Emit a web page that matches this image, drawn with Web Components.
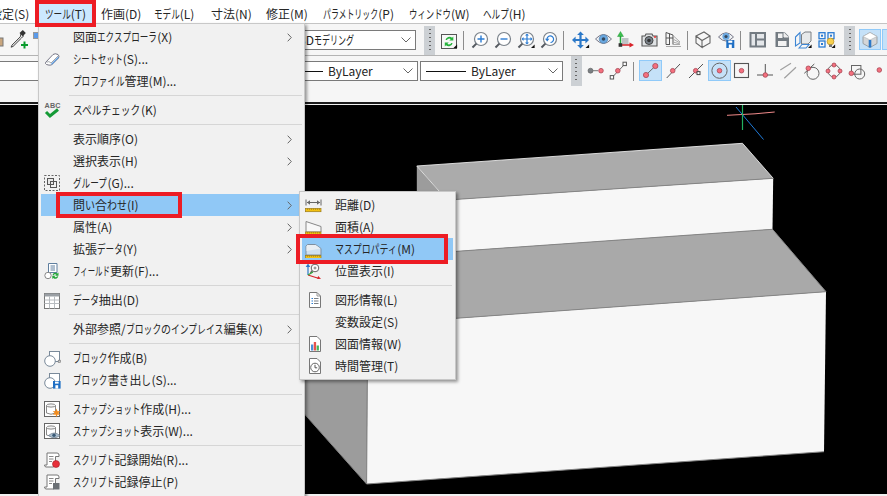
<!DOCTYPE html>
<html lang="ja">
<head>
<meta charset="utf-8">
<style>
html,body{margin:0;padding:0;width:887px;height:496px;overflow:hidden;background:#f0f0f0}
body{font:12px "Noto Sans CJK JP","Noto Sans",sans-serif;color:#262626}
</style>
</head>
<body>
<cad-app>
  <menu-bar>
    <bar-item w="40" label="設定(S)"></bar-item>
    <bar-item w="41" label="ツール(T)" active></bar-item>
    <bar-item w="38" label="作画(D)"></bar-item>
    <bar-item w="42" label="モデル(L)"></bar-item>
    <bar-item w="40" label="寸法(N)"></bar-item>
    <bar-item w="42" label="修正(M)"></bar-item>
    <bar-item w="71" kw="7.9" label="パラメトリック(P)"></bar-item>
    <bar-item w="59" kw="8.4" label="ウィンドウ(W)"></bar-item>
    <bar-item w="45" label="ヘルプ(H)"></bar-item>
  </menu-bar>

  <tool-row first>
    <ui-icon name="dropper" w="38" h="31"></ui-icon>
    <cad-combo style="margin-left:112px;width:266px;margin-top:6px" text="3Dモデリング" pad="148" kw="8"></cad-combo>
    <tool-grip style="margin-left:8px;margin-top:2px;height:29px"></tool-grip>
    <tool-btn icon="refresh" style="margin-left:2.5px"></tool-btn>
    <tool-sep style="margin-left:2.5px"></tool-sep>
    <tool-btn icon="zoomin" style="margin-left:6px"></tool-btn>
    <tool-btn icon="zoomout"></tool-btn>
    <tool-btn icon="zoomwin"></tool-btn>
    <tool-btn icon="zoomprev"></tool-btn>
    <tool-sep style="margin-left:1px"></tool-sep>
    <tool-btn icon="pan" style="margin-left:4.5px"></tool-btn>
    <tool-btn icon="eye"></tool-btn>
    <tool-btn icon="axes"></tool-btn>
    <tool-btn icon="camera"></tool-btn>
    <tool-btn icon="persp"></tool-btn>
    <tool-sep style="margin-left:3px"></tool-sep>
    <tool-btn icon="box" style="margin-left:3.5px"></tool-btn>
    <tool-btn icon="eyesave"></tool-btn>
    <tool-sep style="margin-left:3px"></tool-sep>
    <tool-btn icon="layout" style="margin-left:4.5px"></tool-btn>
    <tool-btn icon="doc"></tool-btn>
    <tool-btn icon="faces"></tool-btn>
    <tool-btn icon="qr"></tool-btn>
    <tool-grip style="margin-left:6.5px;margin-top:2px;height:29px"></tool-grip>
    <tool-btn icon="cube" h="21" sel style="margin-left:4px;margin-top:5px;width:22px"></tool-btn>
    <tool-btn icon="blank" h="21" sel style="margin-left:1px;margin-top:5px"></tool-btn>
  </tool-row>

  <tool-row>
    <cad-combo style="margin-left:-2px;width:200px;margin-top:5px" text=""></cad-combo>
    <cad-combo style="margin-left:2px;width:217.5px;margin-top:5px" text="ByLayer" line="117" pad="5"></cad-combo>
    <cad-combo style="margin-left:2.5px;width:142.5px;margin-top:5px" text="ByLayer" line="40" pad="5"></cad-combo>
    <tool-grip style="margin-left:8px;height:30px"></tool-grip>
    <tool-btn icon="s1" h="21" style="margin-left:2.5px;margin-top:4px"></tool-btn>
    <tool-btn icon="s2" h="21" style="margin-top:4px"></tool-btn>
    <tool-sep short style="margin-left:2.5px;margin-top:6px"></tool-sep>
    <tool-btn icon="s3" h="21" sel style="margin-left:5px;margin-top:4px"></tool-btn>
    <tool-btn icon="s4" h="21" style="margin-top:4px"></tool-btn>
    <tool-btn icon="s5" h="21" style="margin-top:4px"></tool-btn>
    <tool-btn icon="s6" h="21" sel style="margin-top:4px"></tool-btn>
    <tool-btn icon="s7" h="21" style="margin-top:4px"></tool-btn>
    <tool-btn icon="s8" h="21" style="margin-top:4px"></tool-btn>
    <tool-btn icon="s9" h="21" style="margin-top:4px"></tool-btn>
    <tool-btn icon="s10" h="21" style="margin-top:4px"></tool-btn>
    <tool-btn icon="s11" h="21" style="margin-top:4px"></tool-btn>
    <tool-btn icon="s12" h="21" style="margin-top:4px"></tool-btn>
    <tool-btn icon="s13" h="21" style="margin-top:4px"></tool-btn>
  </tool-row>

  <cad-viewport></cad-viewport>

  <pop-menu style="left:38px;top:23px;width:267px" gut="32">
    <menu-row label="図面エクスプローラ(X)" arrow></menu-row>
    <menu-row label="シートセット(S)..." kw="8.3" icon="m_sheet"></menu-row>
    <menu-row label="プロファイル管理(M)..."></menu-row>
    <menu-sep></menu-sep>
    <menu-row label="スペルチェック(K)" kw="9.7" icon="m_abc"></menu-row>
    <menu-sep></menu-sep>
    <menu-row label="表示順序(O)" arrow></menu-row>
    <menu-row label="選択表示(H)" arrow></menu-row>
    <menu-row label="グループ(G)..." icon="m_group"></menu-row>
    <menu-row label="問い合わせ(I)" arrow hi></menu-row>
    <menu-row label="属性(A)" arrow></menu-row>
    <menu-row label="拡張データ(Y)" arrow></menu-row>
    <menu-row label="フィールド更新(F)..." kw="7.4" icon="m_field"></menu-row>
    <menu-sep></menu-sep>
    <menu-row label="データ抽出(D)" icon="m_table"></menu-row>
    <menu-sep></menu-sep>
    <menu-row label="外部参照/ブロックのインプレイス編集(X)" kw="8.8" arrow></menu-row>
    <menu-sep></menu-sep>
    <menu-row label="ブロック作成(B)" icon="m_block"></menu-row>
    <menu-row label="ブロック書き出し(S)..." icon="m_wblock"></menu-row>
    <menu-sep></menu-sep>
    <menu-row label="スナップショット作成(H)..." kw="8.4" icon="m_snap1"></menu-row>
    <menu-row label="スナップショット表示(W)..." kw="8.4" icon="m_snap2"></menu-row>
    <menu-sep></menu-sep>
    <menu-row label="スクリプト記録開始(R)..." kw="8.3" icon="m_rec"></menu-row>
    <menu-row label="スクリプト記録停止(P)" kw="8.3" icon="m_stop"></menu-row>
  </pop-menu>

  <pop-menu style="left:299px;top:191px;width:157px;height:189px" gut="33" sub>
    <menu-row label="距離(D)" icon="q_dist" ix="2"></menu-row>
    <menu-row label="面積(A)" icon="q_area" ix="2"></menu-row>
    <menu-row label="マスプロパティ(M)" kw="8.9" icon="q_mass" ix="2" hi></menu-row>
    <menu-row label="位置表示(I)" icon="q_pos" ix="2"></menu-row>
    <menu-sep short></menu-sep>
    <menu-row label="図形情報(L)" icon="q_list" ix="4"></menu-row>
    <menu-row label="変数設定(S)"></menu-row>
    <menu-row label="図面情報(W)" icon="q_stat" ix="4"></menu-row>
    <menu-row label="時間管理(T)" icon="q_time" ix="4"></menu-row>
  </pop-menu>

  <red-box style="left:35px;top:0;width:61px;height:27px"></red-box>
  <red-box style="left:56px;top:192px;width:126px;height:26px"></red-box>
  <red-box style="left:296px;top:234px;width:152px;height:30px"></red-box>
</cad-app>

<script>
const JP_CSS=`.k,.h{display:inline-block;white-space:nowrap;transform-origin:0 50%}.h{transform:scaleX(.83)}`;
const jp=(t,kw=8.6)=>t.replace(/([\u30A0-\u30FF]+)|([\u3040-\u309F]+)/g,(m,k,h)=>k
  ?`<span class="k" style="width:${(k.length*kw).toFixed(1)}px;transform:scaleX(${(kw/12).toFixed(3)})">${k}</span>`
  :`<span class="h" style="width:${h.length*10}px">${h}</span>`);

const lens=(inner='')=>`<circle cx="11" cy="15" r="6.5" fill="#fff" stroke="#7a828a" stroke-width="1.2"/><path d="M6.4 19.6L2.5 23.5" stroke="#555a60" stroke-width="2"/>${inner}`;
const tri=(x,y)=>`<path d="M${x+3.6} ${y}v3.6h-3.6z" fill="#111"/>`;
const R=(x,y,r=2.3)=>`<circle cx="${x}" cy="${y}" r="${r}" fill="#f4707e" stroke="#a84654" stroke-width=".8"/>`;
const L=(d,c='#555',w=1)=>`<path d="${d}" fill="none" stroke="${c}" stroke-width="${w}"/>`;
const ruler=y=>`<rect x="1.500" y="${y}" width="15.500" height="3.200" fill="#f2c010" stroke="#9a7a18" stroke-width=".7"/><path d="M3.500 ${y}v1.500M5.500 ${y}v1.500M7.500 ${y}v1.500M9.500 ${y}v1.500M11.500 ${y}v1.500M13.500 ${y}v1.500M15.500 ${y}v1.500" stroke="#9a7a18" stroke-width=".6"/>`;
const ICONS={
blank:'',
dropper:`<rect x="-3" y="14" width="6" height="8" fill="#c9a67e" stroke="#777"/>
 <path d="M21 9.500l2.500 2.500-2 2-8.400 8.400-2 .8.800-2 8.400-8.400z" fill="#e8e8e8" stroke="#444"/><path d="M19.500 9l3.300-3 3 3-3 3.300z" fill="#333"/><path d="M21 20h2.500v-2.500h2v2.500h2.500v2h-2.500v2.500h-2v-2.500h-2.500z" fill="#0a9b2e"/>
 <rect x="33.500" y="8.500" width="6" height="6" fill="#5b9bea" stroke="#999"/>`,
refresh:`<rect x="3.5" y="10.5" width="15" height="14" fill="#f7f7f7" stroke="#555"/><path d="M7.500 16a4 4 0 0 1 6.600-2.200l1.200-1.200v4h-4l1.400-1.400a2.400 2.400 0 0 0-3.800.8zM14.600 19a4 4 0 0 1-6.600 2.200l-1.200 1.200v-4h4l-1.400 1.400a2.400 2.400 0 0 0 3.800-.8z" fill="#26b33c"/>${tri(15.5,20.5)}`,
zoomin:lens(L('M7.5 15h7M11 11.5v7','#2b7cd3',1.4)),
zoomout:lens(L('M7.5 15h7','#2b7cd3',1.4)),
zoomwin:lens(L('M6.5 15h9M11 10.5v9','#2b7cd3',1.2)+`<path d="M11 9.500l-2 2h4zM11 20.500l-2-2h4zM5.500 15l2-2v4zM16.500 15l-2-2v4z" fill="#2b7cd3"/>`)+tri(15,20.5),
zoomprev:lens(L('M8 15.500a3.300 3.300 0 1 1 3.500 3','#2b7cd3',1.2)+`<path d="M8.200 17.500l-2.200-2.800h4.400z" fill="#2b7cd3"/>`),
pan:L('M11.5 10v12M5.5 16h12','#2b78c8',2.2)+`<path d="M11.500 7.500l-3.400 3.600h6.800zM11.500 24.500l-3.400-3.600h6.800zM3 16l3.600-3.400v6.800zM20 16l-3.600-3.400v6.800z" fill="#2b78c8"/>`+tri(16.5,20.5),
eye:`<path d="M3.500 15Q11.500 6 19.500 15Q11.500 24 3.500 15z" fill="#eef1f3" stroke="#778" stroke-width="1"/><circle cx="11.500" cy="15" r="4.300" fill="#6aa8e0" stroke="#4a7aa6" stroke-width=".6"/><circle cx="11.500" cy="15" r="1.800" fill="#34485c"/>`,
axes:`<rect x="7" y="14" width="6.500" height="6.500" fill="#bfc3c6"/>${L('M5.5 21V12','#1ea83a',1.5)}<path d="M5.500 7.500l-3 5h6z" fill="#39c04c" stroke="#17852b" stroke-width=".4"/>${L('M7 21H15','#d8232a',1.5)}<path d="M19 21l-4.500-2.600v5.200z" fill="#d8232a"/><rect x="3.600" y="19.200" width="3.600" height="3.600" fill="#333"/>`,
camera:`<path d="M4 12h3l1-2h6l1 2h4v10H4z" fill="#dfe2e4" stroke="#555" stroke-width="1.100"/><circle cx="11" cy="16.500" r="4" fill="#7a828a" stroke="#444"/><circle cx="11" cy="16.500" r="1.800" fill="#333"/><circle cx="17" cy="13" r="1" fill="#e33"/>`,
persp:L('M5 8.5V20.5H9M5 8.5L12 11V20.5M5 14H12M8.5 9.7V20.5','#555',1)+L('M12 11.5L19 18M12 15L19 19M12 20.5H19M5 22.5H20M12 18L19 20','#aaa',1),
box:L('M5 12L13 8L19 12L11 16.5ZM5 12V19L11 23.5V16.5M11 23.5L19 19V12','#666',1.1),
eyesave:`<path d="M4.500 13Q12 4.500 19.500 13Q12 21 4.500 13z" fill="#eef1f3" stroke="#778"/><circle cx="12" cy="12.500" r="3.600" fill="#6aa8e0"/><circle cx="12" cy="12.500" r="1.600" fill="#34485c"/><rect x="12.300" y="16" width="8" height="8" fill="#1f6fc4"/><rect x="14.300" y="16.600" width="4" height="2.200" fill="#fff"/><rect x="14.800" y="20.500" width="3" height="3.500" fill="#fff"/>`,
layout:`<rect x="4.500" y="9" width="14.500" height="13.500" fill="#e4e7ea" stroke="#737b82" stroke-width="2"/>${L('M10 9v13.5M10 15.5h9','#737b82',2)}`,
doc:`<path d="M6.500 8h9l4.500 4.500V23H6.500z" fill="#737b82"/><path d="M15 8.500v4.500h4.500" fill="#eee" stroke="#eee"/><rect x="9" y="9.500" width="4.500" height="4.500" fill="#f2f2f2"/><rect x="9" y="17" width="8.500" height="5" fill="#f2f2f2"/>`,
faces:L('M3.5 13L8 8.5V19L3.5 22Z','#3d86d4',1.1)+`<path d="M9.500 10.500L13 8H19V17L16 20H9.500z" fill="#e7e9ea" stroke="#7a7f83"/>`+L('M7 24L10 20.5H17L14 24Z','#3d86d4',1.1)+tri(16,20.5),
qr:`<g fill="none" stroke="#2b7cd3" stroke-width="1.300"><rect x="4" y="8.700" width="6" height="6"/><rect x="13" y="8.700" width="6" height="6"/><rect x="4" y="17" width="6" height="6"/></g><g fill="#2b7cd3"><rect x="6" y="10.700" width="2" height="2"/><rect x="15" y="10.700" width="2" height="2"/><rect x="6" y="19" width="2" height="2"/></g><circle cx="15.500" cy="17.500" r="3.400" fill="#f7d04e" stroke="#b58a20" stroke-width=".7"/><rect x="14" y="20.500" width="3" height="2.500" fill="#777"/>${tri(16.5,20.5)}`,
cube:`<path d="M11 3.500L18 7.500V14.500L11 18.500L4 14.500V7.500Z" fill="#d4d6d8" stroke="#9aa0a4"/><path d="M11 3.500L18 7.500L11 11L4 7.500Z" fill="#fff" stroke="#b5b9bc" stroke-width=".7"/>${L('M11 11V18.5','#2b78c8',2.6)}`,
s1:`<circle cx="6.500" cy="10.700" r="2.500" fill="#7a7f83" stroke="#5a5a5a" stroke-width=".6"/>${L('M9 10.7H14','#777')}${R(17,10.7)}`,
s2:L('M5 17.5L18 4','#666')+`<rect x="3.200" y="15.600" width="3.400" height="3.400" fill="#fff" stroke="#555"/><rect x="16" y="2.200" width="3.400" height="3.400" fill="#fff" stroke="#555"/>`+R(10.8,10.7),
s3:L('M7 15L16.3 6','#666')+R(7,15,2.6)+R(16.3,6,2.6),
s4:L('M4.7 18L18 4')+R(10.7,10.7),
s5:L('M4 18L18 4')+R(10.7,10.7)+`<rect x="12" y="11.600" width="3" height="3" fill="#fff" stroke="#444"/>`,
s6:`<circle cx="11.500" cy="10.700" r="7.600" fill="none" stroke="#666" stroke-width="1"/>`+R(11.5,10.7),
s7:`<rect x="3.500" y="3.500" width="14" height="14" fill="none" stroke="#555" stroke-width="1.100"/>`+R(10.5,10.7),
s8:L('M11.3 4V15M3 15H19')+R(11.3,15),
s9:L('M3.3 10L14 3.3M7.3 18.3L19 7.3','#a0a0a0',1.2),
s10:L('M4.3 13.3L14.3 4')+`<circle cx="13" cy="13.300" r="6" fill="none" stroke="#666" stroke-width="1"/>`+R(8.3,8.3),
s11:`<circle cx="11" cy="11" r="6" fill="none" stroke="#666" stroke-width="1"/>`+R(11,5,2)+R(11,17,2)+R(5,11,2)+R(17,11,2),
s12:`<rect x="5.500" y="5.500" width="9.400" height="8.700" fill="none" stroke="#666"/><circle cx="13.700" cy="14" r="5" fill="none" stroke="#666"/>`+R(5.3,13.3),
s13:R(10.3,10),
m_sheet:`<path d="M2.500 12.500L10 4.500Q12 3 15 4.500Q16.800 6 15.500 8L8.500 15Q6 15.500 3.500 14.500Q2 13.500 2.500 12.500z" fill="#fff" stroke="#667" stroke-width=".9"/>${L('M3.5 12.3Q6 10.5 8 13L15.5 5.5','#8a9098',.8)}<path d="M8.500 13.500L15.500 6.500V8L8.500 15Z" fill="#4b90dc"/>`,
m_abc:`<text x="1.500" y="7" font-size="7.200" font-weight="700" letter-spacing=".2" font-family="Liberation Sans,sans-serif" fill="#666">ABC</text><path d="M3 11l4 4 8-6.500" fill="none" stroke="#149a36" stroke-width="3"/>`,
m_group:`<rect x="1.500" y="1.500" width="15" height="15" fill="none" stroke="#666" stroke-dasharray="2 1.500"/><rect x="4.500" y="4.500" width="6" height="6" fill="#e8e8e8" stroke="#555"/><rect x="7.500" y="7.500" width="6" height="6" fill="none" stroke="#555"/>`,
m_field:`<path d="M5.500 1.500h8.500v9h-8.500z" fill="#fff" stroke="#5f7f9f"/>${L('M7.5 4h4.5M7.5 6h4.5M7.5 8h4.5','#5f7f9f')}<circle cx="5" cy="13.500" r="3.200" fill="#fff" stroke="#888"/><path d="M9.500 13a3 3 0 0 1 5-1.400l1-1v3.200h-3.200l1-1a1.600 1.600 0 0 0-2.600.5zM15.300 14.500a3 3 0 0 1-5 1.400l-1 1v-3.200h3.200l-1 1a1.600 1.600 0 0 0 2.600-.5z" fill="#26a83c"/>`,
m_table:`<rect x="1.500" y="2.500" width="15" height="15" fill="#fff" stroke="#777"/><rect x="1.500" y="2.500" width="15" height="3" fill="#9a9fa4"/>${L('M1.5 9h15M1.5 12.5h15M6.5 5.5v12M11.5 5.500v12','#b8bcc0')}`,
m_block:`<rect x="6.500" y="2.500" width="10" height="10" fill="#fff" stroke="#7a8a9a"/><circle cx="7" cy="12" r="5.300" fill="#fff" stroke="#7a8a9a" stroke-width="1"/><rect x="15.200" y="11.200" width="2.400" height="2.400" fill="#ccc" stroke="#777" stroke-width=".6"/>`,
m_wblock:`<rect x="6.500" y="2.500" width="10" height="10" fill="#fff" stroke="#7a8a9a"/><circle cx="7" cy="12" r="5.300" fill="#fff" stroke="#7a8a9a" stroke-width="1"/><rect x="10" y="10" width="7.600" height="7.600" fill="#1f6fc4"/><rect x="12" y="10.600" width="3.600" height="2" fill="#fff"/><rect x="12.400" y="14.200" width="2.800" height="3.400" fill="#fff"/>`,
m_snap1:`<rect x="1.500" y="1.500" width="15" height="15" fill="#fff" stroke="#666"/><ellipse cx="8" cy="5.500" rx="4.500" ry="1.600" fill="#f4f4f4" stroke="#888"/>${L('M3.5 5.5V13Q8 15.5 12.5 13V5.5','#888')}<path d="M13.500 8.500l1 2.700 2.700-.3-1.800 2 1.800 2-2.700-.3-1 2.700-1-2.700-2.700.3 1.800-2-1.800-2 2.700.3z" fill="#f28c1e"/>`,
m_snap2:`<rect x="1.500" y="1.500" width="15" height="15" fill="#fff" stroke="#666"/><ellipse cx="8" cy="5.500" rx="4.500" ry="1.600" fill="#f4f4f4" stroke="#888"/>${L('M3.5 5.5V13Q8 15.5 12.5 13V5.5','#888')}<path d="M5.500 13.500Q11 8.500 17 13.500Q11 18 5.500 13.500z" fill="#aabccb" stroke="#6a7a8a" stroke-width=".7"/><circle cx="11" cy="13.300" r="1.700" fill="#3a5a76"/>`,
m_rec:`<path d="M4 2h10q2 0 2 2v1.500h-3.500V13q0 3-2.500 3H3Q1.500 15.800 1.500 14H4z" fill="#fff" stroke="#777"/>${L('M6 5.500h4.500M6 8h4.500M6 10.500h3','#888')}<circle cx="13" cy="13" r="3.500" fill="#e8303a" stroke="#a51f28" stroke-width=".6"/>`,
m_stop:`<path d="M4 2h10q2 0 2 2v1.500h-3.500V13q0 3-2.500 3H3Q1.500 15.800 1.500 14H4z" fill="#fff" stroke="#777"/>${L('M6 5.500h4.500M6 8h4.500M6 10.500h3','#888')}<rect x="10" y="10" width="6.500" height="6.500" fill="#6a6f74"/>`,
q_dist:L('M3 6.500H16','#666')+L('M2 3.500v6M17 3.500v6','#666')+`<path d="M3 6.500l3-2.200v4.400zM16 6.500l-3-2.200v4.400z" fill="#666"/>`+ruler(12.5),
q_area:`<path d="M2 3.500L17 8.500V14H2z" fill="#f8f8f8" stroke="#888"/>`+ruler(14),
q_mass:`<path d="M3.500 4.500H11.500L17 8.500V15H2V6z" fill="#cfe0ee" stroke="#7e8f9f"/><path d="M3.500 5H11.500L16.500 8.500L2.500 11V6z" fill="#e8eef3"/>`+ruler(15.5),
q_pos:`<circle cx="11" cy="6" r="3.800" fill="#fff" stroke="#666"/><path d="M8.200 8.800L6.500 11" stroke="#666" stroke-width="1.500"/>${L('M9.5 6h3M11 4.500v3','#666',.8)}${L('M4 13V4','#2b78c8',1.2)}<path d="M4 1.500l-2.300 3.500h4.600z" fill="#2b78c8"/>${L('M4 13L15 16.500','#d8232a',1.2)}<path d="M17 17l-4-.2 1.300-2.800z" fill="#d8232a"/>${L('M4 13L9 10','#2ea83a',1.2)}`,
q_list:`<path d="M3.500 1.500h7.500l3.500 3.500v11.500h-11z" fill="#fff" stroke="#777"/>${L('M11 1.500v3.500h3.500','#999')}${L('M8 7.500h4.500M8 10h4.500M8 12.500h4.500','#7a7f84')}${L('M5.500 7.500h1.500M5.500 10h1.500M5.500 12.500h1.500','#2b7cd3',1.1)}`,
q_stat:`<path d="M3.500 1.500h7.500l3.500 3.500v11.500h-11z" fill="#fff" stroke="#777"/><rect x="5" y="9.500" width="2.300" height="6" fill="#4b8fd8"/><rect x="7.800" y="7" width="2.300" height="8.500" fill="#e8534c"/><rect x="10.600" y="10.500" width="2.300" height="5" fill="#46b35a"/>`,
q_time:`<path d="M3.500 1.500h7.500l3.500 3.500v11.500h-11z" fill="#fff" stroke="#777"/><circle cx="9" cy="10.500" r="4.300" fill="#fff" stroke="#666"/>${L('M9 7.800V10.800H11.200','#555')}`,
};

function def(name,css,render){
  customElements.define(name,class extends HTMLElement{
    constructor(){super();this.attachShadow({mode:'open'})}
    connectedCallback(){this.shadowRoot.innerHTML=`<style>${css}</style>`+render(this)}
  });
}
const num=(e,a)=>e.hasAttribute(a)?+e.getAttribute(a):undefined;
def('cad-app',`:host{display:block;position:relative;width:887px;height:496px;overflow:hidden}`,()=>`<slot></slot>`);
def('menu-bar',`:host{display:flex;height:23px;background:#fff;margin-left:-17.5px;white-space:nowrap}`,()=>`<slot></slot>`);
def('bar-item',`:host{display:block;padding:0 7.5px;height:23px;line-height:27px;flex:none}
:host([active]){background:#cce8ff}${JP_CSS}`,e=>{e.style.width=e.getAttribute('w')+'px';return jp(e.getAttribute('label'),num(e,'kw'))});
def('tool-row',`:host{display:flex;align-items:flex-start;background:#f6f6f6;overflow:hidden;height:46px}
:host([first]){height:31px;border-top:1px solid #c4c4c4;border-bottom:1px solid #b4b4b4}`,()=>`<slot></slot>`);
def('tool-grip',`:host{display:flex;justify-content:center;flex:none;width:11px;height:30px;background:#ccd0d4}
i{display:block;width:2px;height:24px;margin-top:3px;background:repeating-linear-gradient(#666 0 1px,transparent 1px 4px)}`,()=>`<i></i>`);
def('tool-sep',`:host{display:block;flex:none;width:1px;height:19px;margin-top:7px;background:#8c8c8c}`,()=>``);
def('tool-btn',`:host{display:block;flex:none;width:23px;box-sizing:border-box}
:host([sel]){background:#c5e1f8;box-shadow:inset 0 0 0 1px #90caf9}
svg{display:block;overflow:visible}`,e=>{
  const h=e.getAttribute('h')||31;
  return `<svg width="23" height="${h}" viewBox="0 0 23 ${h}">${ICONS[e.getAttribute('icon')]||''}</svg>`});
def('ui-icon',`:host{display:block;flex:none}svg{display:block;overflow:hidden}`,e=>{
  const w=e.getAttribute('w')||18,h=e.getAttribute('h')||18;
  return `<svg width="${w}" height="${h}" viewBox="0 0 ${w} ${h}">${ICONS[e.getAttribute('name')]||''}</svg>`});
def('cad-combo',`:host{display:flex;align-items:center;box-sizing:border-box;flex:none;height:20px;background:#fff;border:1px solid #7a7a7a;white-space:nowrap;position:relative;font-size:12px;color:#222;line-height:18px}
i{display:block;flex:none;height:1px;background:#111;margin-right:5px}
svg{position:absolute;right:3px;top:5px}${JP_CSS}`,e=>{
  const l=e.getAttribute('line'),p=e.getAttribute('pad')||5,t=e.getAttribute('text')||'';
  return `<span style="display:block;width:${p}px;flex:none"></span>${l?`<i style="width:${l}px"></i>`:''}<span>${jp(t,num(e,'kw'))}</span>
  <svg width="12" height="8" viewBox="0 0 12 8"><path d="M1.500 1.500L6 6L10.500 1.500" fill="none" stroke="#666" stroke-width="1"/></svg>`});
def('cad-viewport',`:host{display:block;height:392px;background:#f0f0f0;border-top:2px solid #1c1c1c;box-sizing:border-box}
svg{display:block;margin-top:1px}`,()=>`<svg width="887" height="389" viewBox="0 105 887 389">
<rect x="0" y="105" width="887" height="389" fill="#000"/>
<path d="M300 409L366.600 484L367.800 324.600L300 260z" fill="#9c9c9c" stroke="#808080"/>
<path d="M447 252L772.500 229.300L826 291.700L367.800 324.600L300 260z" fill="#a9a9a9"/>
<path d="M416.800 166L447 200V252L416.800 218z" fill="#9c9c9c"/>
<path d="M416.800 166L742.500 143.300L773.200 178.300L447 200z" fill="#ababab"/>
<path d="M447 200L773.200 178.300L772.500 229.300L447 252z" fill="#f7f7f7"/>
<path d="M367.800 324.600L826 291.700L824 451.700L366.600 484z" fill="#f7f7f7"/>
<path d="M447 200L416.800 166L742.500 143.300L773.200 178.300" fill="none" stroke="#e8e8e8" stroke-width=".9"/>
<path d="M447 200L773.200 178.300M447 252L772.500 229.300L826 291.700L367.800 324.600" fill="none" stroke="#858585"/>
<path d="M367.800 324.600L366.600 484L824 451.700" fill="none" stroke="#858585"/>
<path d="M727 115.300L755 113.800L774.700 112" fill="none" stroke="#f08a8a"/>
<path d="M736 107L763.500 139.500" fill="none" stroke="#1f7ad8"/>
<path d="M742.500 105V130" fill="none" stroke="#22b060" stroke-width="1.200"/>
</svg>`);
def('pop-menu',`:host{display:block;position:absolute;box-sizing:border-box;background:#f1f1f1;border:1px solid #c8c8c8;padding:2px;box-shadow:2px 2px 3px rgba(0,0,0,.4);height:480px}`,e=>{
  e.style.setProperty('--gut',(e.getAttribute('gut')||32)+'px');return `<slot></slot>`});
def('menu-sep',`:host{display:block;height:7px;padding-top:3px;box-sizing:border-box}
i{display:block;height:1px;background:#d6d6d6;margin-left:28px}:host([short]) i{margin-left:28px;margin-right:1px}`,()=>`<i></i>`);
def('menu-row',`:host{display:flex;position:relative;align-items:center;height:22px;white-space:nowrap;line-height:22px}
:host([hi]){background:#90c8f6}
.ic{position:absolute;top:2px}
.t{margin-left:var(--gut,32px)}
.a{position:absolute;right:10px;top:6.500px}${JP_CSS}`,e=>{
  const ic=e.getAttribute('icon'),x=e.getAttribute('ix')||2;
  return `${ic?`<ui-icon class="ic" style="left:${x}px" name="${ic}"></ui-icon>`:''}<span class="t">${jp(e.getAttribute('label'),num(e,'kw'))}</span>
  ${e.hasAttribute('arrow')?`<svg class="a" width="5" height="9" viewBox="0 0 5 9"><path d="M.7 .7L4.300 4.500L.7 8.300" fill="none" stroke="#666" stroke-width="1"/></svg>`:''}`});
def('red-box',`:host{display:block;position:absolute;box-sizing:border-box;border:4px solid #ed1c24;pointer-events:none}`,()=>``);
</script>
</body>
</html>
